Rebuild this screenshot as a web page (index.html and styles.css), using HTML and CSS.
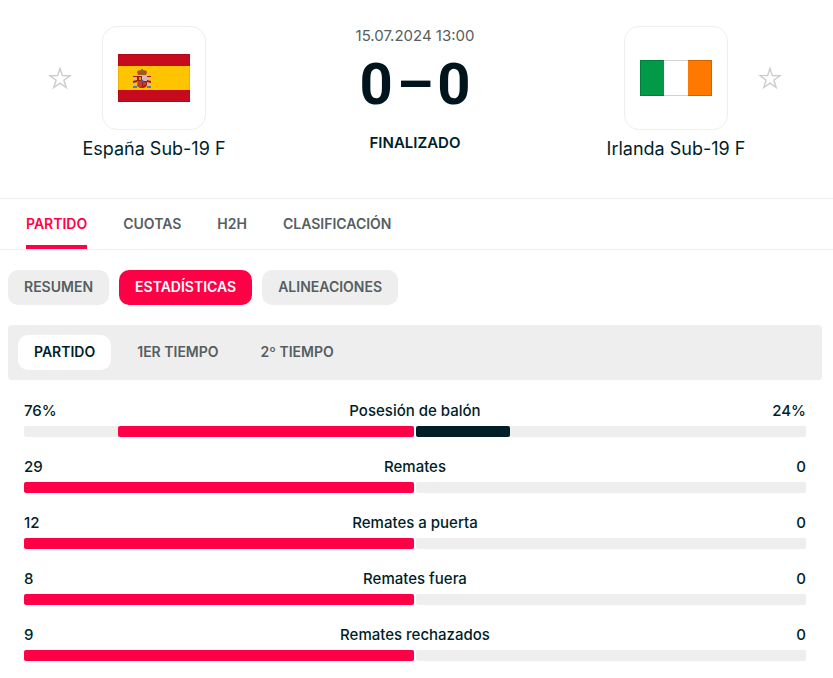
FILE: index.html
```
<!DOCTYPE html>
<html lang="es">
<head>
<meta charset="utf-8">
<meta name="viewport" content="width=device-width, initial-scale=1">
<title>España Sub-19 F - Irlanda Sub-19 F</title>
<link rel="stylesheet" href="styles.css">
</head>
<body>
<header class="match">
  <button class="star" type="button" aria-label="Seguir a España Sub-19 F">
    <svg width="24" height="24" viewBox="0 0 24 24"><path d="M12 2.500 14.400 9.600 22 9.700 15.900 14.200 18.200 21.500 12 17.100 5.800 21.500 8.100 14.200 2 9.700 9.600 9.600Z"/></svg>
  </button>
  <div class="team">
    <div class="crest">
      <svg width="72" height="48" viewBox="0 0 72 48">
        <rect width="72" height="48" fill="#c60b1e"/>
        <rect y="12" width="72" height="24" fill="#ffc400"/>
        <path d="M.5 0V48M71.5 0V48M0 .5H72M0 47.500H72" stroke="#000" stroke-opacity=".08"/>
        <path d="M16 23h2v9h-2zM30 23h2v9h-2z" fill="#ccb8a0"/>
        <path d="M15 32h4v2h-4zM29 32h4v2h-4z" fill="#607a9a"/>
        <path d="M15 22h4v1h-4zM29 22h4v1h-4zM15 27l4-1v2l-4 1zM29 26l4 1v2l-4-1z" fill="#ad1519"/>
        <path d="M19 18q0-2 5-2t5 2l-1 3h-8z" fill="#b84b24"/>
        <path d="M20 20h8v1h-8zM23 15h2v4h-2z" fill="#8a6a12"/>
        <path d="M19 22h10v8q0 4-5 4t-5-4z" fill="#ad1519"/>
        <path d="M24 22h5v5h-5z" fill="#dfb5ba"/>
        <path d="M19 27h5v6q-5 0-5-4z" fill="#c8741d"/>
        <path d="M21 27v5M23 27v6" stroke="#ad1519"/>
        <path d="M25 28h3v3l-3 1z" fill="#a44a32"/>
        <circle cx="24" cy="27" r="1.500" fill="#4d5aa0"/>
        <path d="M21 23h2v3h-2z" fill="#cf9b25"/>
      </svg>
    </div>
    <div class="name">España Sub-19 F</div>
  </div>
  <div class="result">
    <time datetime="2024-07-15T13:00">15.07.2024 13:00</time>
    <div class="score"><span>0</span><span>–</span><span>0</span></div>
    <div class="status">FINALIZADO</div>
  </div>
  <div class="team">
    <div class="crest">
      <svg width="72" height="36" viewBox="0 0 72 36">
        <rect width="24" height="36" fill="#009a49"/>
        <rect x="24" width="24" height="36" fill="#fff"/>
        <rect x="48" width="24" height="36" fill="#ff7900"/>
        <rect x=".5" y=".5" width="71" height="35" fill="none" stroke="#000" stroke-opacity=".18"/>
      </svg>
    </div>
    <div class="name">Irlanda Sub-19 F</div>
  </div>
  <button class="star" type="button" aria-label="Seguir a Irlanda Sub-19 F">
    <svg width="24" height="24" viewBox="0 0 24 24"><path d="M12 2.500 14.400 9.600 22 9.700 15.900 14.200 18.200 21.500 12 17.100 5.800 21.500 8.100 14.200 2 9.700 9.600 9.600Z"/></svg>
  </button>
</header>
<nav class="tabs">
  <a class="active" href="#partido">PARTIDO</a>
  <a href="#cuotas">CUOTAS</a>
  <a href="#h2h">H2H</a>
  <a href="#clasificacion">CLASIFICACIÓN</a>
</nav>
<nav class="pills">
  <a href="#resumen">RESUMEN</a>
  <a class="active" href="#estadisticas">ESTADÍSTICAS</a>
  <a href="#alineaciones">ALINEACIONES</a>
</nav>
<div class="periods">
  <button class="active" type="button">PARTIDO</button>
  <button type="button">1ER TIEMPO</button>
  <button type="button">2º TIEMPO</button>
</div>
<main class="stats">
  <section class="stat">
    <div class="values"><span>76%</span><span>Posesión de balón</span><span>24%</span></div>
    <div class="bars"><div class="bar home"><i style="width:76%"></i></div><div class="bar away"><i style="width:24%"></i></div></div>
  </section>
  <section class="stat">
    <div class="values"><span>29</span><span>Remates</span><span>0</span></div>
    <div class="bars"><div class="bar home"><i style="width:100%"></i></div><div class="bar away"></div></div>
  </section>
  <section class="stat">
    <div class="values"><span>12</span><span>Remates a puerta</span><span>0</span></div>
    <div class="bars"><div class="bar home"><i style="width:100%"></i></div><div class="bar away"></div></div>
  </section>
  <section class="stat">
    <div class="values"><span>8</span><span>Remates fuera</span><span>0</span></div>
    <div class="bars"><div class="bar home"><i style="width:100%"></i></div><div class="bar away"></div></div>
  </section>
  <section class="stat">
    <div class="values"><span>9</span><span>Remates rechazados</span><span>0</span></div>
    <div class="bars"><div class="bar home"><i style="width:100%"></i></div><div class="bar away"></div></div>
  </section>
</main>
</body>
</html>
```
FILE: styles.css
```
* { box-sizing: border-box; }
body {
  margin: 0;
  background: #fff;
  color: #001e28;
  font: 500 14px/20px Inter, Roboto, sans-serif;
}
a { color: inherit; text-decoration: none; }
button { border: 0; padding: 0; background: none; font: inherit; color: inherit; cursor: pointer; }
svg { display: block; }

.match {
  display: grid;
  grid-template-columns: 24px 164px 1fr 164px 24px;
  padding: 26px 51px 34px 48px;
  text-align: center;
}
.star { align-self: start; margin-top: 40px; }
.star path { fill: none; stroke: #c8cdcd; stroke-width: 1.4; }
.team { display: flex; flex-direction: column; align-items: center; }
.crest {
  display: grid;
  place-items: center;
  width: 104px;
  height: 104px;
  border: 1px solid #eee;
  border-radius: 15px;
}
.name { margin-top: 6px; font-size: 18px; line-height: 26px; font-weight: 400; white-space: nowrap; }
.result { font-size: 15px; }
.result time { display: block; color: #555e61; font-weight: 400; }
.score {
  display: flex;
  justify-content: center;
  gap: 4px;
  margin: 6px 0;
  color: #00141e;
  font: 700 58px/64px Roboto, sans-serif;
}
.status { line-height: 42px; font-weight: 600; }

.tabs {
  display: flex;
  gap: 36px;
  padding: 0 26px;
  border: solid #eee;
  border-width: 1px 0;
  color: #555e61;
  font-weight: 600;
}
.tabs a { padding: 15px 0 11px; border-bottom: 4px solid transparent; }
.tabs .active {
  color: #ff0046;
  background: linear-gradient(#ff0046, #ff0046) bottom / 100% 4px no-repeat border-box;
  border-radius: 2px 2px 0 0;
}

.pills { display: flex; gap: 10px; padding: 20px 8px; color: #555e61; font-weight: 600; }
.pills a { padding: 7px 16px 8px; border-radius: 10px; background: #eee; }
.pills .active { color: #fff; background: #ff0046; }

.periods {
  display: flex;
  gap: 10px;
  margin: 0 11px 0 8px;
  padding: 10px;
  border-radius: 4px;
  background: #eee;
  color: #555e61;
  font-weight: 600;
}
.periods button { padding: 7px 16px 8px; border-radius: 10px; }
.periods .active { background: #fff; color: #001e28; }

.stats { display: grid; gap: 20px; padding: 21px 27px 16px 24px; }
.values { display: grid; grid-template-columns: 1fr auto 1fr; padding-bottom: 5px; font-size: 15px; }
.values span:last-child { text-align: right; }
.bars { display: grid; grid-template-columns: 1fr 1fr; gap: 2px; }
.bar { display: flex; height: 11px; border-radius: 2px; background: #eee; }
.home { justify-content: flex-end; }
.bar i { border-radius: 2px; background: #ff0046; }
.away i { background: #001e28; }
```
